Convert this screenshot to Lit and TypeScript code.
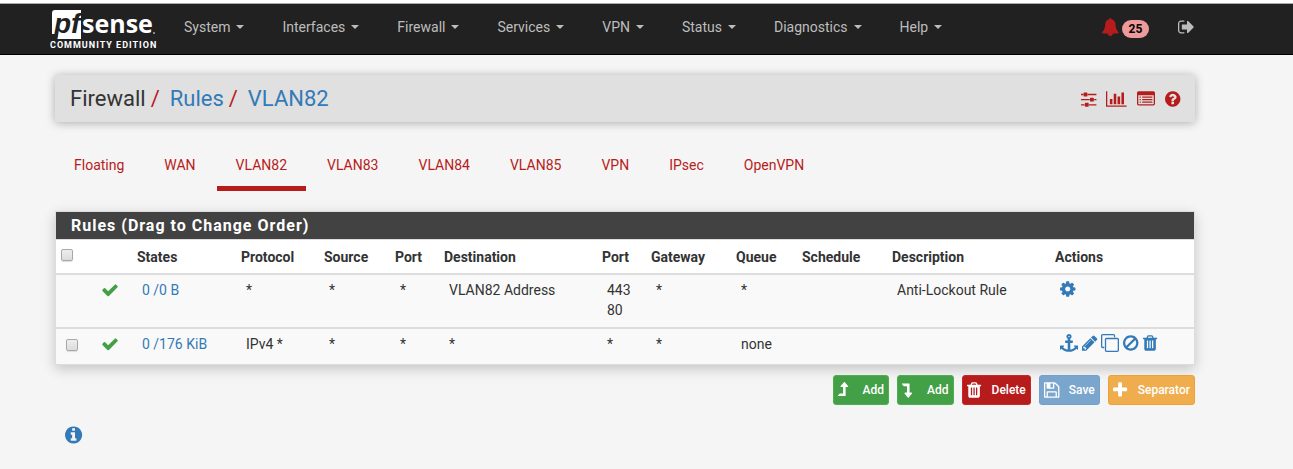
import { LitElement, html, css, svg, nothing } from "lit";
import { customElement, property } from "lit/decorators.js";

type Icon = { x: number; w: number; d: string };

const ICONS: Record<string, Icon> = {
  check: { x: 100, w: 1600, d: "M1671 566q0 40-28 68l-724 724-136 136q-28 28-68 28t-68-28l-136-136-362-362q-28-28-28-68t28-68l136-136q28-28 68-28t68 28l294 295 656-657q28-28 68-28t68 28l136 136q28 28 28 68z" },
  cog: { x: 128, w: 1536, d: "M1152 896q0-106-75-181t-181-75-181 75-75 181 75 181 181 75 181-75 75-181zm512-109v222q0 12-8 23t-20 13l-185 28q-19 54-39 91 35 50 107 138 10 12 10 25t-9 23q-27 37-99 108t-94 71q-12 0-26-9l-138-108q-44 23-91 38-16 136-29 186-7 28-36 28h-222q-14 0-24.5-8.5t-11.5-21.5l-28-184q-49-16-90-37l-141 107q-10 9-25 9-14 0-25-11-126-114-165-168-7-10-7-23 0-12 8-23 15-21 51-66.5t54-70.5q-27-50-41-99l-183-27q-13-2-21-12.5t-8-23.5v-222q0-12 8-23t19-13l186-28q14-46 39-92-40-57-107-138-10-12-10-24 0-10 9-23 26-36 98.5-107.5t94.5-71.5q13 0 26 10l138 107q44-23 91-38 16-136 29-186 7-28 36-28h222q14 0 24.5 8.5t11.5 21.5l28 184q49 16 90 37l142-107q9-9 24-9 13 0 25 10 129 119 165 170 7 8 7 22 0 12-8 23-15 21-51 66.5t-54 70.5q26 50 41 98l183 28q13 2 21 12.5t8 23.5z" },
  anchor: { x: 0, w: 1792, d: "M960 256q0-26-19-45t-45-19-45 19-19 45 19 45 45 19 45-19 19-45zm832 928v352q0 22-20 30-8 2-12 2-12 0-23-9l-93-93q-119 143-318.5 226.5t-429.5 83.5-429.5-83.5-318.5-226.5l-93 93q-9 9-23 9-4 0-12-2-20-8-20-30v-352q0-14 9-23t23-9h352q22 0 30 20 8 19-7 35l-100 100q67 91 189.5 153.5t271.5 82.5v-647h-192q-26 0-45-19t-19-45v-128q0-26 19-45t45-19h192v-163q-58-34-93-92.5t-35-128.5q0-106 75-181t181-75 181 75 75 181q0 70-35 128.5t-93 92.5v163h192q26 0 45 19t19 45v128q0 26-19 45t-45 19h-192v647q149-20 271.5-82.5t189.5-153.5l-100-100q-15-16-7-35 8-20 30-20h352q14 0 23 9t9 23z" },
  pencil: { x: 128, w: 1536, d: "M491 1536l91-91-235-235-91 91v107h128v128h107zm523-928q0-22-22-22-10 0-17 7l-542 542q-7 7-7 17 0 22 22 22 10 0 17-7l542-542q7-7 7-17zm-54-192l416 416-832 832h-416v-416zm683 96q0 53-37 90l-166 166-416-416 166-165q36-38 90-38 53 0 91 38l235 234q37 39 37 91z" },
  clone: { x: 0, w: 1792, d: "M1664 1632v-1088q0-13-9.500-22.500t-22.500-9.500h-1088q-13 0-22.500 9.500t-9.500 22.500v1088q0 13 9.500 22.500t22.500 9.500h1088q13 0 22.500-9.500t9.500-22.500zm128-1088v1088q0 66-47 113t-113 47h-1088q-66 0-113-47t-47-113v-1088q0-66 47-113t113-47h1088q66 0 113 47t47 113zm-384-384v160h-128v-160q0-13-9.500-22.500t-22.500-9.500h-1088q-13 0-22.500 9.500t-9.500 22.500v1088q0 13 9.500 22.500t22.500 9.500h160v128h-160q-66 0-113-47t-47-113v-1088q0-66 47-113t113-47h1088q66 0 113 47t47 113z" },
  ban: { x: 128, w: 1536, d: "M1440 893q0-161-87-295l-754 753q137 89 297 89 111 0 211.500-43.500t173.500-116.500 116-174.500 43-212.500zm-999 299l755-754q-135-91-300-91-148 0-273 73t-198 199-73 274q0 162 89 299zm1223-299q0 157-61 300t-163.500 246-245 164-298.500 61-298.500-61-245-164-163.500-246-61-300 61-299.500 163.500-245.500 245-164 298.500-61 298.500 61 245 164 163.500 245.500 61 299.500z" },
  trash: { x: 192, w: 1408, d: "M704 1376v-704q0-14-9-23t-23-9h-64q-14 0-23 9t-9 23v704q0 14 9 23t23 9h64q14 0 23-9t9-23zm256 0v-704q0-14-9-23t-23-9h-64q-14 0-23 9t-9 23v704q0 14 9 23t23 9h64q14 0 23-9t9-23zm256 0v-704q0-14-9-23t-23-9h-64q-14 0-23 9t-9 23v704q0 14 9 23t23 9h64q14 0 23-9t9-23zm-544-992h448l-48-117q-7-9-17-11h-317q-10 2-17 11zm928 32v64q0 14-9 23t-23 9h-96v948q0 83-47 143.500t-113 60.500h-832q-66 0-113-58.500t-47-141.500v-952h-96q-14 0-23-9t-9-23v-64q0-14 9-23t23-9h309l70-167q15-37 54-63t79-26h320q40 0 79 26t54 63l70 167h309q14 0 23 9t9 23z" },
  save: { x: 128, w: 1536, d: "M512 1536h768v-384h-768v384zm896 0h128v-896q0-14-10-38.500t-20-34.500l-281-281q-10-10-34-20t-39-10v416q0 40-28 68t-68 28h-576q-40 0-68-28t-28-68v-416h-128v1280h128v-416q0-40 28-68t68-28h832q40 0 68 28t28 68v416zm-384-928v-320q0-13-9.500-22.500t-22.500-9.500h-192q-13 0-22.500 9.500t-9.500 22.500v320q0 13 9.500 22.500t22.500 9.500h192q13 0 22.500-9.500t9.500-22.500zm640 32v928q0 40-28 68t-68 28h-1344q-40 0-68-28t-28-68v-1344q0-40 28-68t68-28h928q40 0 88 20t76 48l280 280q28 28 48 76t20 88z" },
  plus: { x: 192, w: 1408, d: "M1600 736v192q0 40-28 68t-68 28h-416v416q0 40-28 68t-68 28h-192q-40 0-68-28t-28-68v-416h-416q-40 0-68-28t-28-68v-192q0-40 28-68t68-28h416v-416q0-40 28-68t68-28h192q40 0 68 28t28 68v416h416q40 0 68 28t28 68z" },
  up: { x: 384, w: 1024, d: "M1395 573q-19 35-59 35h-192v864q0 14-9 23t-23 9h-704q-21 0-29-18-8-20 4-35l160-192q9-11 25-11h320v-640h-192q-40 0-58-37-17-37 9-68l320-384q18-22 49-22t49 22l320 384q27 32 10 70z" },
  down: { x: 384, w: 1024, d: "M400 256h704q13 0 23 10t10 23v863h192q40 0 59 35 17 37-10 69l-320 384q-18 22-49 22t-49-22l-320-384q-26-31-9-68 18-36 58-36h192v-640h-320q-16 0-25-11l-160-192q-12-15-4-34 8-19 28-19z" },
  info: { x: 128, w: 1536, d: "M1152 1376v-160q0-14-9-23t-23-9h-96v-512q0-14-9-23t-23-9h-320q-14 0-23 9t-9 23v160q0 14 9 23t23 9h96v320h-96q-14 0-23 9t-9 23v160q0 14 9 23t23 9h448q14 0 23-9t9-23zm-128-896v-160q0-14-9-23t-23-9h-192q-14 0-23 9t-9 23v160q0 14 9 23t23 9h192q14 0 23-9t9-23zm640 416q0 209-103 385.500t-279.500 279.500-385.500 103-385.500-103-279.500-279.500-103-385.500 103-385.500 279.500-279.500 385.500-103 385.500 103 279.500 279.500 103 385.500z" },
  help: { x: 128, w: 1536, d: "M1024 1376v-192q0-14-9-23t-23-9h-192q-14 0-23 9t-9 23v192q0 14 9 23t23 9h192q14 0 23-9t9-23zm256-672q0-88-55.500-163t-138.500-116-170-41q-243 0-371 213-15 24 8 42l132 100q7 6 19 6 16 0 25-12 53-68 86-92 34-24 86-24 48 0 85.500 26t37.500 59q0 38-20 61t-68 45q-63 28-115.500 86.500t-52.500 125.500v36q0 14 9 23t23 9h192q14 0 23-9t9-23q0-19 21.500-49.500t54.500-49.500q32-18 49-28.500t46-35 44.500-48 28-60.500 12.500-81zm384 192q0 209-103 385.500t-279.500 279.500-385.500 103-385.500-103-279.500-279.500-103-385.500 103-385.500 279.500-279.500 385.500-103 385.500 103 279.500 279.500 103 385.500z" },
  sliders: { x: 128, w: 1536, d: "M480 1408v128h-352v-128h352zm352-128q26 0 45 19t19 45v256q0 26-19 45t-45 19h-256q-26 0-45-19t-19-45v-256q0-26 19-45t45-19h256zm160-384v128h-864v-128h864zm-640-512v128h-224v-128h224zm1312 1024v128h-736v-128h736zm-960-1152q26 0 45 19t19 45v256q0 26-19 45t-45 19h-256q-26 0-45-19t-19-45v-256q0-26 19-45t45-19h256zm640 512q26 0 45 19t19 45v256q0 26-19 45t-45 19h-256q-26 0-45-19t-19-45v-256q0-26 19-45t45-19h256zm320 128v128h-224v-128h224zm0-512v128h-864v-128h864z" },
  chart: { x: -128, w: 2048, d: "M512 896v512h-256v-512h256zm384-512v1024h-256v-1024h256zm1024 1152v128h-2048v-1536h128v1408h1920zm-640-896v768h-256v-768h256zm384-384v1152h-256v-1152h256z" },
  list: { x: 0, w: 1792, d: "M384 1184v64q0 13-9.500 22.500t-22.500 9.500h-64q-13 0-22.500-9.500t-9.500-22.500v-64q0-13 9.500-22.500t22.500-9.500h64q13 0 22.500 9.500t9.500 22.500zm0-256v64q0 13-9.500 22.500t-22.500 9.500h-64q-13 0-22.500-9.500t-9.500-22.500v-64q0-13 9.500-22.500t22.500-9.500h64q13 0 22.500 9.500t9.500 22.500zm0-256v64q0 13-9.500 22.500t-22.500 9.500h-64q-13 0-22.500-9.500t-9.500-22.500v-64q0-13 9.500-22.500t22.500-9.500h64q13 0 22.500 9.500t9.500 22.500zm1152 512v64q0 13-9.500 22.500t-22.500 9.500h-960q-13 0-22.500-9.500t-9.500-22.500v-64q0-13 9.500-22.500t22.500-9.500h960q13 0 22.500 9.500t9.500 22.500zm0-256v64q0 13-9.500 22.500t-22.500 9.500h-960q-13 0-22.500-9.500t-9.500-22.500v-64q0-13 9.500-22.500t22.500-9.500h960q13 0 22.500 9.500t9.500 22.500zm0-256v64q0 13-9.500 22.500t-22.500 9.500h-960q-13 0-22.500-9.500t-9.500-22.500v-64q0-13 9.500-22.500t22.500-9.500h960q13 0 22.500 9.500t9.500 22.500zm128 704v-832q0-13-9.500-22.500t-22.500-9.500h-1472q-13 0-22.500 9.500t-9.500 22.500v832q0 13 9.500 22.500t22.500 9.500h1472q13 0 22.500-9.500t9.500-22.500zm128-1088v1088q0 66-47 113t-113 47h-1472q-66 0-113-47t-47-113v-1088q0-66 47-113t113-47h1472q66 0 113 47t47 113z" },
  bell: { x: 64, w: 1664, d: "M1728 1408q0 52-38 90t-90 38h-448q0 106-75 181t-181 75-181-75-75-181h-448q-52 0-90-38t-38-90q50-42 91-88t85-119.500 74.500-158.500 50-206 19.500-260q0-152 117-282.500t307-158.500q-8-19-8-39 0-40 28-68t68-28 68 28 28 68q0 20-8 39 190 28 307 158.500t117 282.500q0 139 19.500 260t50 206 74.500 158.500 85 119.500 91 88z" },
  signout: { x: 64, w: 1664, d: "M704 1440q0 4 1 20t.5 26.500-3 23.500-10 19.500-20.500 6.500h-320q-119 0-203.500-84.500t-84.500-203.500v-704q0-119 84.500-203.500t203.500-84.500h320q13 0 22.500 9.500t9.500 22.500q0 4 1 20t.5 26.500-3 23.500-10 19.500-20.500 6.500h-320q-66 0-113 47t-47 113v704q0 66 47 113t113 47h312l11.500 1 11.500 3 8 5.500 7 9 2 13.500zm928-544q0 26-19 45l-544 544q-19 19-45 19t-45-19-19-45v-288h-448q-26 0-45-19t-19-45v-384q0-26 19-45t45-19h448v-288q0-26 19-45t45-19 45 19l544 544q19 19 19 45z" },
};

@customElement("fw-icon")
export class FwIcon extends LitElement {
  @property() name = "";
  static styles = css`
    :host { display: inline-flex; height: 18px; flex: none; }
    svg { display: block; height: 100%; fill: currentColor; overflow: visible; }
  `;
  render() {
    const i = ICONS[this.name];
    if (!i) return nothing;
    return html`<svg viewBox="${i.x} 0 ${i.w} 1792" aria-hidden="true">${svg`<path d=${i.d} />`}</svg>`;
  }
}

const MENUS = ["System", "Interfaces", "Firewall", "Services", "VPN", "Status", "Diagnostics", "Help"];
const TABS = ["Floating", "WAN", "VLAN82", "VLAN83", "VLAN84", "VLAN85", "VPN", "IPsec", "OpenVPN"];
const TOOLS = [["sliders", "Settings"], ["chart", "Status"], ["list", "Logs"], ["help", "Help"]];
const COLUMNS = ["States", "Protocol", "Source", "Port", "Destination", "Port", "Gateway", "Queue", "Schedule", "Description", "Actions"];
const COL_CLASSES = ["c-pick", "c-state", "c-states", "c-proto", "c-source", "c-port", "c-dest", "c-port", "c-gate", "c-queue", "c-sched", "c-desc", "c-act"];
const ACTIONS = [["anchor", "Move checked rules here"], ["pencil", "Edit"], ["clone", "Copy"], ["ban", "Disable"], ["trash", "Delete"]];
const BUTTONS = [
  ["up", "Add", "success"],
  ["down", "Add", "success"],
  ["trash", "Delete", "danger"],
  ["save", "Save", "primary"],
  ["plus", "Separator", "warning"],
];

@customElement("app-root")
export class AppRoot extends LitElement {
  static styles = css`
    :host {
      display: block;
      min-height: 100vh;
      background: #f5f5f5;
      color: #333;
      font: 14px/20px Roboto, "Liberation Sans", sans-serif;
      --link: #337ab7;
      --red: #b71c1c;
      --line: #ddd;
    }
    * { box-sizing: border-box; }
    a { color: var(--link); text-decoration: none; }
    .strip { height: 3px; background: #fff; }
    .navbar { background: #212121; border-bottom: 1px solid #000; border-top: 1px solid #aaa; }
    .frame { padding-right: 43px; }
    .container { max-width: 1140px; margin: 0 auto; }
    .nav-row { display: flex; align-items: flex-start; height: 50px; }
    .brand { display: block; width: 108px; height: 42px; margin: 4px 3px 0 -5px; }
    .brand svg { display: block; overflow: visible; }
    .menus { display: flex; list-style: none; margin: 0 auto 0 4px; padding: 0; }
    .menus a { display: flex; align-items: center; gap: 6px; padding: 13px 19px; color: #bdbdbd; }
    .menus a::after { content: ""; border: 4px solid transparent; border-top-color: currentColor; border-bottom: 0; }
    .alerts { display: flex; align-items: flex-start; gap: 3px; margin-top: 14px; color: var(--red); }
    .badge { height: 18px; margin-top: 2px; padding: 0 7px; border-radius: 9px; background: #ef9a9a; color: #000; font-size: 12px; line-height: 18px; font-weight: 700; }
    .logout { color: #bdbdbd; margin: 14px 0 0 29px; display: flex; }
    .crumbs {
      display: flex; align-items: center; justify-content: space-between;
      margin-top: 20px; padding: 12px 15px; border-radius: 2px;
      background: #e0e0e0; box-shadow: 0 1px 10px rgba(0, 0, 0, 0.3);
      font-size: 22px; line-height: 23px;
    }
    .trail { display: flex; list-style: none; margin: 0; padding: 0; }
    .trail li + li::before { content: "/"; color: var(--red); padding: 0 10px 0 5px; }
    .tools { display: flex; align-items: center; gap: 10px; }
    .tools a { display: flex; color: var(--red); }
    .tabs { display: flex; gap: 2px; list-style: none; margin: 28px 0 20px; padding: 0; }
    .tabs a { display: block; padding: 5px 19px 11px; color: var(--red); border-bottom: 5px solid transparent; }
    .tabs a.active { border-bottom-color: var(--red); }
    .panel { border: 1px solid var(--line); background: #fff; box-shadow: 0 4px 12px rgba(0, 0, 0, 0.2); }
    .panel h2 { margin: 0; padding: 4px 15px 3px; background: #424242; color: #fff; font-size: 16px; line-height: 20px; font-weight: 700; letter-spacing: 1px; border-bottom: 1px solid var(--line); }
    table { width: 100%; border-collapse: separate; border-spacing: 0; table-layout: fixed; }
    th { text-align: left; font-weight: 700; padding: 7px 5px 6px; line-height: 20px; vertical-align: top; }
    td { padding: 5px 10px; line-height: 20px; vertical-align: top; border-top: 2px solid var(--line); background: #f9f9f9; }
    td.tall { padding-bottom: 7px; }
    .rule td { padding-bottom: 10px; }
    .c-pick { width: 36px; } .c-state { width: 40px; } .c-states { width: 104px; }
    .c-proto { width: 83px; } .c-source { width: 71px; } .c-port { width: 49px; }
    .c-dest { width: 158px; } .c-gate { width: 85px; } .c-queue { width: 66px; }
    .c-sched { width: 90px; } .c-desc { width: 163px; } .c-act { width: 144px; }
    input[type="checkbox"] {
      appearance: none; display: block; width: 12px; height: 12px; margin: 2px 0 0;
      border: 1px solid #a8a8a8; border-radius: 2px; background: linear-gradient(#eee, #dcdcdc);
      box-shadow: 0 1px 1px #ddd;
    }
    td input[type="checkbox"] { margin-top: 5px; }
    .pass { color: #43a047; display: flex; padding-top: 1px; }
    .acts { display: flex; align-items: center; gap: 4px; }
    .acts a { display: flex; }
    .buttons { display: flex; justify-content: flex-end; gap: 8px; margin-top: 10px; }
    button {
      display: flex; align-items: center; height: 30px; padding: 0 4px;
      border: 1px solid; border-radius: 3px; color: #fff;
      font: 500 12px/18px Roboto, "Liberation Sans", sans-serif;
    }
    .slot { display: flex; width: 25px; }
    .success { background: #43a047; border-color: #4caf50; }
    .danger { background: #b71c1c; border-color: #c62828; }
    .primary { background: #7aa5cd; border-color: #74a0cb; }
    .warning { background: #f0ad4e; border-color: #eea236; }
    .info { display: inline-flex; margin: 20px 0 0 10px; }
    .info fw-icon { height: 20px; }
  `;

  private logo() {
    return html`<svg width="108" height="42" viewBox="0 0 108 42" role="img" aria-label="pfSense Community Edition">
      <path d="M5 2H31V31H7L8 26H2V5Q2 2 5 2Z" fill="#fff" />
      <text x="4" y="25" font-family="Liberation Sans" font-weight="700" font-style="italic" font-size="28" fill="#212121">pf</text>
      <text x="32" y="25" font-family="Open Sans" font-weight="700" font-size="25" fill="#fff">sense</text>
      <circle cx="104" cy="25" r="1" fill="#aaa" />
      <text x="0" y="40" font-family="Roboto" font-weight="700" font-size="9" letter-spacing="1" fill="#fff">COMMUNITY EDITION</text>
    </svg>`;
  }

  private cells(values: string[]) {
    return values.map((v) => html`<td>${v}</td>`);
  }

  render() {
    return html`
      <div class="strip"></div>
      <header class="navbar frame">
        <div class="container nav-row">
          <a class="brand" href="#">${this.logo()}</a>
          <ul class="menus">${MENUS.map((m) => html`<li><a href="#">${m}</a></li>`)}</ul>
          <a class="alerts" href="#" aria-label="25 notices"><fw-icon name="bell"></fw-icon><span class="badge">25</span></a>
          <a class="logout" href="#" aria-label="Log out"><fw-icon name="signout"></fw-icon></a>
        </div>
      </header>
      <main class="frame">
        <div class="container">
          <nav class="crumbs">
            <ol class="trail">
              <li>Firewall</li><li><a href="#">Rules</a></li><li><a href="#">VLAN82</a></li>
            </ol>
            <div class="tools">${TOOLS.map(([i, l]) => html`<a href="#" aria-label=${l}><fw-icon name=${i}></fw-icon></a>`)}</div>
          </nav>
          <ul class="tabs">${TABS.map((t) => html`<li><a href="#" class=${t === "VLAN82" ? "active" : ""}>${t}</a></li>`)}</ul>
          <section class="panel">
            <h2>Rules (Drag to Change Order)</h2>
            <table>
              <colgroup>${COL_CLASSES.map((c) => html`<col class=${c} />`)}</colgroup>
              <thead>
                <tr>
                  <th><input type="checkbox" aria-label="Select all rules" /></th>
                  <th></th>
                  ${COLUMNS.map((c) => html`<th>${c}</th>`)}
                </tr>
              </thead>
              <tbody>
                <tr>
                  <td></td>
                  <td><span class="pass"><fw-icon name="check"></fw-icon></span></td>
                  <td><a href="#">0 /0 B</a></td>
                  ${this.cells(["*", "*", "*", "VLAN82 Address"])}
                  <td class="tall">443<br />80</td>
                  ${this.cells(["*", "*", "", "Anti-Lockout Rule"])}
                  <td><span class="acts"><a href="#" aria-label="Settings"><fw-icon name="cog"></fw-icon></a></span></td>
                </tr>
                <tr class="rule">
                  <td><input type="checkbox" aria-label="Select rule" /></td>
                  <td><span class="pass"><fw-icon name="check"></fw-icon></span></td>
                  <td><a href="#">0 /176 KiB</a></td>
                  ${this.cells(["IPv4 *", "*", "*", "*", "*", "*", "none", "", ""])}
                  <td><span class="acts">${ACTIONS.map(([i, l]) => html`<a href="#" aria-label=${l}><fw-icon name=${i}></fw-icon></a>`)}</span></td>
                </tr>
              </tbody>
            </table>
          </section>
          <div class="buttons">
            ${BUTTONS.map(([i, l, c]) => html`<button type="button" class=${c}><span class="slot"><fw-icon name=${i}></fw-icon></span>${l}</button>`)}
          </div>
          <a class="info" href="#" aria-label="Information"><fw-icon name="info"></fw-icon></a>
        </div>
      </main>
    `;
  }
}
